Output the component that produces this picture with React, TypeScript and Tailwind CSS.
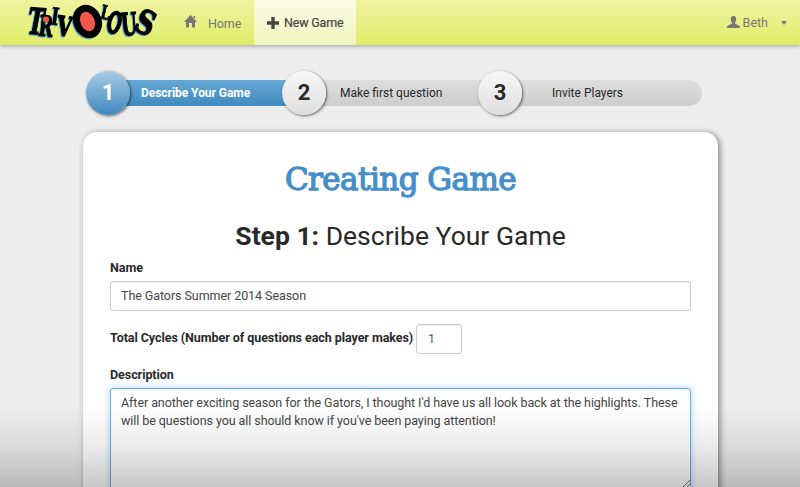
import type { ReactNode } from "react";

function LogoLetter({ x, y, size, width, rotate, weight = 1.3, italic = false, children }: { x: number; y: number; size: number; width: number; rotate: number; weight?: number; italic?: boolean; children: string }) {
  return (
    <g transform={`rotate(${rotate} ${x + width / 2} ${y - size / 3})`} fontFamily="'DejaVu Serif', serif" fontWeight="bold" fontStyle={italic ? "italic" : "normal"}>
      <text x={x} y={y} fontSize={size} textLength={width} lengthAdjust="spacingAndGlyphs" fill="#000" stroke="#000" strokeWidth={weight}>{children}</text>
    </g>
  );
}

function Logo() {
  return (
    <svg className="block h-[45px] w-[145px] shrink-0 overflow-visible [filter:drop-shadow(-1px_1px_0.4px_#5aa5dc)]" viewBox="22 0 145 45" role="img" aria-label="Trivolous">
      <LogoLetter x={28} y={34} size={36} width={16} rotate={4} italic>T</LogoLetter>
      <LogoLetter x={39} y={36} size={28} width={14} rotate={6}>R</LogoLetter>
      <ellipse cx="46" cy="19.500" rx="3.200" ry="3" fill="#ee5645" />
      <LogoLetter x={51} y={25} size={24} width={8} rotate={8} weight={0.5}>I</LogoLetter>
      <LogoLetter x={57} y={36} size={27} width={15} rotate={8}>V</LogoLetter>
      <ellipse cx="87.500" cy="21.500" rx="10.600" ry="13.600" transform="rotate(-22 87.500 21.500)" fill="#f3594b" stroke="#000" strokeWidth="7" />
      <LogoLetter x={101} y={19} size={19} width={9} rotate={12} weight={0.6}>L</LogoLetter>
      <ellipse cx="114.500" cy="22.500" rx="5" ry="10" transform="rotate(14 114.500 22.500)" fill="none" stroke="#000" strokeWidth="4" />
      <LogoLetter x={121} y={35} size={31} width={16} rotate={-5}>U</LogoLetter>
      <LogoLetter x={136} y={34} size={33} width={19} rotate={24}>S</LogoLetter>
    </svg>
  );
}

function StepBadge({ n, active = false }: { n: number; active?: boolean }) {
  return (
    <div className={`relative z-10 flex size-11 shrink-0 items-center justify-center rounded-full bg-linear-to-b pb-px text-[22px] font-bold shadow-[1px_1px_3px_rgba(0,0,0,0.6)] ${active ? "from-[#a9cbe3] to-[#3c87be] text-white" : "from-[#f8f8f8] to-[#dedede] text-[#292929]"}`}>
      {n}
    </div>
  );
}

function StepBar({ className, children }: { className: string; children: ReactNode }) {
  return <div className={`flex h-[26px] items-center bg-linear-to-b text-[12px] whitespace-nowrap ${className}`}>{children}</div>;
}

export default function App() {
  return (
    <div className="relative h-[487px] w-[800px] overflow-hidden bg-[#ededed] font-[Roboto,sans-serif] text-[#292929]">
      <header className="flex h-[45px] bg-linear-to-b from-[#f0f3a0] to-[#dfed65] pl-[22px] text-[12.5px] text-[#777] shadow-[0_1px_4px_rgba(0,0,0,0.35)]">
        <Logo />
        <a className="ml-[17px] flex w-[70px] items-center">
          <svg className="mb-[2px] h-[13px] w-[13px]" viewBox="0 0 13 13" fill="#777"><path d="M6.5 0 13 7H11v5.5H8V8H5v4.500H2V7H0ZM9.500 1h1.600v3L9.500 2.300Z" /></svg>
          <span className="mt-[3px] ml-[11px] tracking-[-0.1px]">Home</span>
        </a>
        <a className="flex w-[102px] items-center bg-linear-to-b from-[#fafbe4] to-[#f0f5bd] pl-[13px] text-[#444]">
          <svg className="h-3 w-3" viewBox="0 0 12 12" fill="#444"><path d="M4.300 0h3.400v4.300H12v3.400H7.700V12H4.300V7.700H0V4.300h4.300Z" /></svg>
          <span className="mt-px ml-[5px] tracking-[-0.2px] [-webkit-text-stroke:0.2px_#444]">New Game</span>
        </a>
        <a className="ml-auto flex items-center pr-[13px]">
          <svg className="mb-[2px] h-3 w-[13px]" viewBox="0 0 13 12" fill="#777"><path d="M6.500 0C4.800 0 3.800 1.200 3.800 3c0 1.500.500 2.800 1.200 3.600v1.200C3.300 8.700.800 9.200.400 10L0 12h13l-.4-2c-.4-.8-2.900-1.300-4.600-2.200V6.600C8.700 5.800 9.200 4.500 9.200 3 9.200 1.200 8.200 0 6.500 0Z" /></svg>
          <span className="mt-px ml-[3px]">Beth</span>
          <span className="ml-[13px] border-x-[3.5px] border-t-[4px] border-x-transparent border-t-[#777]" />
        </a>
      </header>

      <nav className="ml-[86px] mt-[26px] flex h-11 w-[616px] items-center">
        <StepBadge n={1} active />
        <StepBar className="-ml-3 w-[176px] from-[#66a8d5] to-[#3f8abf] pl-[23px] font-bold text-white"><span className="tracking-[-0.04px]">Describe Your Game</span></StepBar>
        <div className="-ml-3"><StepBadge n={2} /></div>
        <StepBar className="-ml-3 w-[176px] from-[#dedede] to-[#cdcdcd] pl-[26px]"><span>Make first question</span></StepBar>
        <div className="-ml-3"><StepBadge n={3} /></div>
        <StepBar className="-ml-3 w-[192px] rounded-r-full from-[#dedede] to-[#cdcdcd] pl-[42px]"><span>Invite Players</span></StepBar>
      </nav>

      <main className="ml-[83px] mt-[17px] h-[400px] w-[635px] rounded-t-[14px] bg-white px-[27px] pt-[27px] shadow-[2px_1px_6px_rgba(0,0,0,0.45)]">
        <h1 className="h-10 text-center font-['DejaVu_Serif',serif] text-[31px] leading-[41px] tracking-[-0.55px] whitespace-nowrap text-[#478fc9] [-webkit-text-stroke:1.3px_#478fc9]">Creating Game</h1>
        <h2 className="mt-[21px] h-8 text-center text-[26.5px] leading-8"><strong>Step 1:</strong> Describe Your Game</h2>
        <label className="mt-[8px] block h-4 text-[12.5px] leading-4 font-bold">Name</label>
        <div className="mt-[5px] flex h-[30px] w-[581px] items-center rounded-[3px] border border-[#ccc] px-[10px] text-[12.5px] tracking-[-0.07px] text-[#444] shadow-[inset_0_1px_1px_rgba(0,0,0,0.08)]">The Gators Summer 2014 Season</div>
        <div className="mt-[13px] flex h-[30px] items-center">
          <label className="mb-[2px] w-[306px] text-[12.5px] font-bold tracking-[-0.06px] whitespace-nowrap">Total Cycles (Number of questions each player makes)</label>
          <div className="flex h-[30px] w-[46px] items-center rounded-[3px] border border-[#ccc] pl-[11px] text-[12.5px] text-[#555] shadow-[inset_0_1px_1px_rgba(0,0,0,0.08)]">1</div>
        </div>
        <label className="mt-[13px] block h-4 text-[12.5px] leading-4 font-bold tracking-[-0.05px]">Description</label>
        <div className="relative mt-[5px] h-[104px] w-[581px] rounded-[3px] border border-[#66afe9] px-[10px] pt-[5px] text-[12.5px] leading-[18px] tracking-[-0.07px] whitespace-nowrap text-[#444] shadow-[inset_0_1px_1px_rgba(0,0,0,0.07),0_0_7px_rgba(102,175,233,0.55)]">
          After another exciting season for the Gators, I thought I'd have us all look back at the highlights. These<br />
          will be questions you all should know if you've been paying attention!
          <svg className="absolute top-[91px] right-0 h-2 w-2" viewBox="0 0 8 8" stroke="#777" strokeWidth="1"><path d="M0 8 8 0M4 8l4-4" /></svg>
        </div>
      </main>
      <div className="pointer-events-none absolute inset-x-0 bottom-0 h-[80px] bg-linear-to-b from-transparent via-black/8 to-black/22" />
    </div>
  );
}
